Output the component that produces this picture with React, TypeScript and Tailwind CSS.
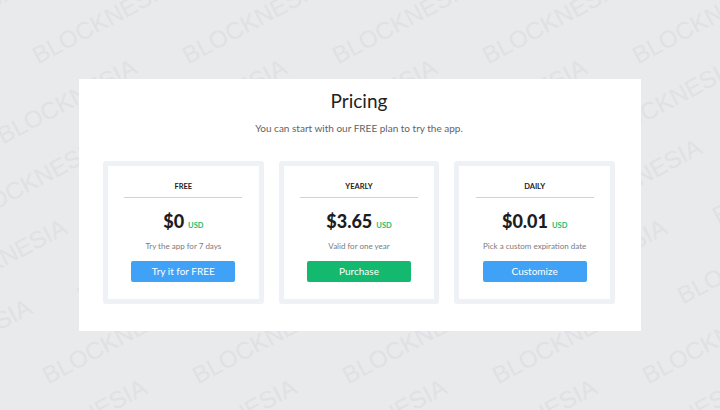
import React from 'react';

// Plans shown in the pricing card
const plans = [
    { name: 'FREE', price: '$0', note: 'Try the app for 7 days', cta: 'Try it for FREE', color: 'blue' },
    { name: 'YEARLY', price: '$3.65', note: 'Valid for one year', cta: 'Purchase', color: 'green' },
    { name: 'DAILY', price: '$0.01', note: 'Pick a custom expiration date', cta: 'Customize', color: 'blue' },
];

// Build the tiled watermark positions
const marks: { x: number; y: number }[] = [];
for (let r = 0; r < 6; r++) {
    const y = 68 + 80 * r;
    const shift = (((40 - 35 * r) % 150) + 150) % 150;
    for (let x = shift - 150; x < 760; x += 150) marks.push({ x, y });
}

const Watermark = () => (
    <div aria-hidden className="pointer-events-none absolute inset-0 overflow-hidden">
        {marks.map((m, i) => (
            <span
                key={i}
                className="absolute origin-bottom-left -rotate-[28deg] whitespace-nowrap text-[24px] leading-none text-[#e0e1e3] [font-family:'Liberation_Sans',Arial,sans-serif]"
                style={{ left: m.x, top: m.y - 24 }}
            >
                BLOCKNESIA
            </span>
        ))}
    </div>
);

const PlanBox = ({ plan }: { plan: (typeof plans)[number] }) => (
    <div className="rounded-[3px] border-[5px] border-[#eef1f6] bg-white">
        <div className="flex flex-col items-center pt-[16px] pb-[17px]">
            <div className="text-[7.5px] font-bold leading-[10px] text-[#222]">{plan.name}</div>
            <div className="mt-[5px] h-px w-[118px] bg-[#d3d3d3]" />
            <div className="mt-[13px] flex h-[20px] items-baseline gap-[4px] leading-[20px]">
                <span className="text-[18px] font-black text-[#1d1d1f]">{plan.price}</span>
                <span className="text-[7.5px] font-bold text-[#17c06e]">USD</span>
            </div>
            <div className="mt-[10px] text-[8px] leading-[11px] text-[#7a7a80]">{plan.note}</div>
            <button
                className={
                    plan.color === 'green'
                        ? 'mt-[9px] h-[21px] w-[104px] rounded-[2px] bg-[#12b96f] text-[10px] text-white'
                        : 'mt-[9px] h-[21px] w-[104px] rounded-[2px] bg-[#3fa2f7] text-[10px] text-white'
                }
            >
                {plan.cta}
            </button>
        </div>
    </div>
);

export default function App() {
    return (
        <div className="relative flex h-[410px] w-full items-center justify-center overflow-hidden bg-[#e9eaec] [font-family:Lato,'Open_Sans',sans-serif]">
            <Watermark />
            <div className="relative z-10 h-[252px] w-[562px] bg-white pt-[10px] pl-[24px] pr-[26px]">
                <h1 className="text-center text-[19px] leading-[24px] text-[#222]">Pricing</h1>
                <p className="mt-[7px] text-center text-[10px] leading-[16px] text-[#626266]">
                    You can start with our FREE plan to try the app.
                </p>
                <div className="mt-[25px] grid grid-cols-3 gap-[15px]">
                    {plans.map(p => (
                        <PlanBox key={p.name} plan={p} />
                    ))}
                </div>
            </div>
        </div>
    );
}
